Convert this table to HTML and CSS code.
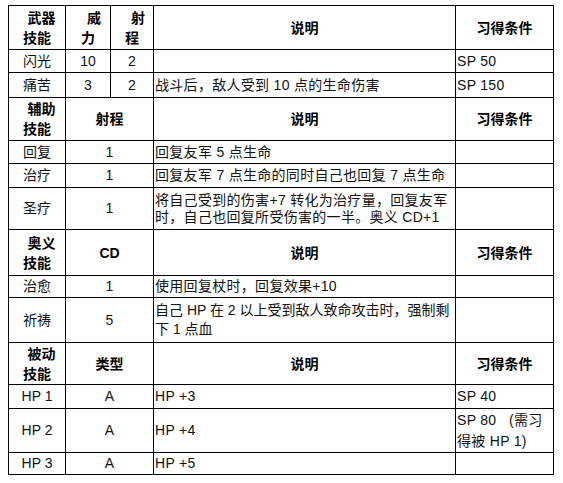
FILE: index.html
```html
<!DOCTYPE html>
<html lang="zh">
<head>
<meta charset="utf-8">
<title>技能表</title>
<link rel="stylesheet" href="styles.css">
</head>
<body>
<table class="skills">
  <colgroup>
    <col class="c1"><col class="c2"><col class="c3"><col class="c4"><col class="c5">
  </colgroup>
  <tr class="r44">
    <th><span class="lead1">武器</span><br>技能</th>
    <th><span class="lead2">威</span><br>力</th>
    <th><span class="lead2">射</span><br>程</th>
    <th class="hd">说明</th>
    <th class="hd">习得条件</th>
  </tr>
  <tr class="r23">
    <td class="ctr">闪光</td><td class="ctr">10</td><td class="ctr">2</td><td class="txt"></td><td class="txt">SP 50</td>
  </tr>
  <tr class="r25">
    <td class="ctr">痛苦</td><td class="ctr">3</td><td class="ctr">2</td><td class="txt">战斗后，敌人受到 10 点的生命伤害</td><td class="txt">SP 150</td>
  </tr>

  <tr class="r43">
    <th><span class="lead1">辅助</span><br>技能</th>
    <th colspan="2" class="hd">射程</th>
    <th class="hd">说明</th>
    <th class="hd">习得条件</th>
  </tr>
  <tr class="r23">
    <td class="ctr">回复</td><td colspan="2" class="ctr">1</td><td class="txt">回复友军 5 点生命</td><td class="txt"></td>
  </tr>
  <tr class="r24">
    <td class="ctr">治疗</td><td colspan="2" class="ctr">1</td><td class="txt">回复友军 7 点生命的同时自己也回复 7 点生命</td><td class="txt"></td>
  </tr>
  <tr class="r42">
    <td class="ctr">圣疗</td><td colspan="2" class="ctr">1</td><td class="txt tight">将自己受到的伤害+7 转化为治疗量，回复友军<br>时，自己也回复所受伤害的一半。奥义 CD+1</td><td class="txt"></td>
  </tr>

  <tr class="r46">
    <th><span class="lead1">奥义</span><br>技能</th>
    <th colspan="2" class="hd">CD</th>
    <th class="hd">说明</th>
    <th class="hd">习得条件</th>
  </tr>
  <tr class="r22">
    <td class="ctr">治愈</td><td colspan="2" class="ctr">1</td><td class="txt">使用回复杖时，回复效果+10</td><td class="txt"></td>
  </tr>
  <tr class="r45">
    <td class="ctr">祈祷</td><td colspan="2" class="ctr">5</td><td class="txt mid">自己 HP 在 2 以上受到敌人致命攻击时，强制剩<br>下 1 点血</td><td class="txt"></td>
  </tr>

  <tr class="r42">
    <th><span class="lead1">被动</span><br>技能</th>
    <th colspan="2" class="hd">类型</th>
    <th class="hd">说明</th>
    <th class="hd">习得条件</th>
  </tr>
  <tr class="r24">
    <td class="ctr">HP 1</td><td colspan="2" class="ctr">A</td><td class="txt">HP +3</td><td class="txt">SP 40</td>
  </tr>
  <tr class="r44">
    <td class="ctr">HP 2</td><td colspan="2" class="ctr">A</td><td class="txt">HP +4</td><td class="txt loose">SP 80 &nbsp;&nbsp;(需习<br>得被 HP 1)</td>
  </tr>
  <tr class="r22">
    <td class="ctr">HP 3</td><td colspan="2" class="ctr">A</td><td class="txt">HP +5</td><td class="txt"></td>
  </tr>
</table>
</body>
</html>
```

FILE: styles.css
```css
html, body {
  margin: 0;
  padding: 0;
  background: #ffffff;
}

body {
  padding: 5px 0 0 8px;
  font-family: "Liberation Sans", "Noto Sans CJK SC", sans-serif;
  font-size: 14px;
  color: #111111;
}

.skills {
  border-collapse: collapse;
  table-layout: fixed;
  width: 546px;
}

.c1 { width: 57px; }
.c2 { width: 45px; }
.c3 { width: 43px; }
.c4 { width: 302px; }
.c5 { width: 98px; }

.skills th,
.skills td {
  border: 1px solid #000000;
  padding: 0 1px;
  vertical-align: middle;
}

.skills th {
  font-weight: bold;
  text-align: center;
  line-height: 20px;
  color: #000000;
}

.skills td {
  line-height: 17px;
}

.lead1 {
  padding-left: 9px;
}

.lead2 {
  padding-left: 12px;
}

.hd {
  padding-left: 14px;
}

.ctr {
  text-align: center;
}

.txt {
  text-align: left;
  letter-spacing: 0.3px;
  white-space: nowrap;
}

.tight { line-height: 16px; }
.skills td.mid { line-height: 19px; letter-spacing: 0; }
.skills td.loose { line-height: 21px; }

.r22 { height: 22px; }
.r23 { height: 23px; }
.r24 { height: 24px; }
.r25 { height: 25px; }
.r42 { height: 42px; }
.r43 { height: 43px; }
.r44 { height: 44px; }
.r45 { height: 45px; }
.r46 { height: 46px; }
```
